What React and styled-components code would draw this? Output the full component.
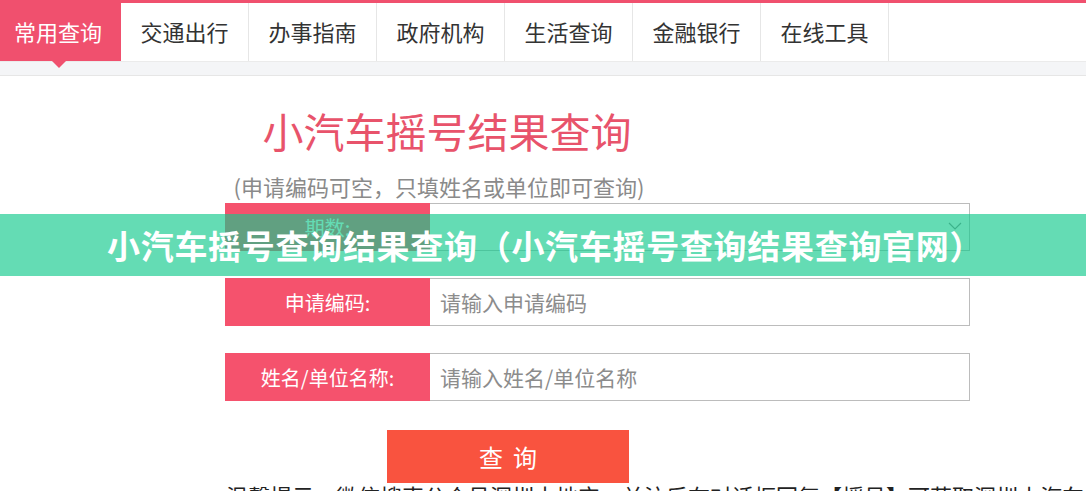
import React from "react";
import styled, { createGlobalStyle } from "styled-components";

const FONT = `"Noto Sans CJK SC", "Noto Sans", sans-serif`;

const Global = createGlobalStyle`
  html, body { margin: 0; padding: 0; background: #fff; overflow: hidden; }
  body { font-family: ${FONT}; }
  * { box-sizing: border-box; }
`;

const Page = styled.div`
  position: relative;
  width: 1086px;
  height: 491px;
  overflow: hidden;
  background: #fff;
`;

const TopLine = styled.div`
  height: 3px;
  background: #f0506e;
`;

const Nav = styled.nav`
  display: flex;
  height: 58px;
  background: #fff;
`;

const Tab = styled.div`
  position: relative;
  display: flex;
  align-items: center;
  justify-content: ${(p) => (p.$active ? "flex-start" : "center")};
  width: ${(p) => (p.$active ? 121 : 128)}px;
  padding-left: ${(p) => (p.$active ? 14 : 0)}px;
  padding-bottom: 2px;
  border-right: 1px solid ${(p) => (p.$active ? "#f0506e" : "#e6e6e6")};
  background: ${(p) => (p.$active ? "#f0506e" : "#fff")};
  color: ${(p) => (p.$active ? "#fff" : "#333")};
  font-size: 22px;
  line-height: 1;
  white-space: nowrap;
  ${(p) =>
    p.$active &&
    `&::after {
      content: "";
      position: absolute;
      left: 52px;
      bottom: -7px;
      border-left: 7px solid transparent;
      border-right: 7px solid transparent;
      border-top: 7px solid #f0506e;
    }`}
`;

const Strip = styled.div`
  height: 15px;
  background: #f4f5f7;
  border-top: 1px solid #ebebeb;
  border-bottom: 1px solid #e6e6e6;
`;

const Main = styled.main`
  padding-left: 225px;
`;

const Header = styled.div`
  width: 430px;
  text-align: center;
`;

const Title = styled.h1`
  margin: 29px 0 0 14px;
  font-size: 41px;
  line-height: 50px;
  font-weight: 400;
  color: #e8536b;
`;

const Subtitle = styled.p`
  margin: 16px 0 0 -2px;
  font-size: 22px;
  line-height: 30px;
  color: #8a8a8a;
  white-space: nowrap;
`;

const Form = styled.div`
  display: flex;
  flex-direction: column;
  gap: 27px;
  margin-top: 2px;
  width: 745px;
`;

const Row = styled.div`
  display: flex;
  height: 48px;
`;

const Label = styled.div`
  flex: 0 0 205px;
  display: flex;
  align-items: center;
  justify-content: center;
  background: #f5526d;
  color: #fff;
  font-size: 20px;
`;

const Field = styled.div`
  position: relative;
  flex: 1;
  display: flex;
  align-items: center;
  padding-left: 10px;
  border: 1px solid #bcbcbc;
  border-left: none;
  color: #8c8c8c;
  font-size: 21px;
  background: #fff;
`;

const Chevron = styled.svg`
  position: absolute;
  right: 7px;
  top: 50%;
  margin-top: -5px;
`;

const Button = styled.button`
  display: flex;
  align-items: center;
  justify-content: center;
  margin: 29px 0 0 162px;
  width: 242px;
  height: 53px;
  border: none;
  background: #f9533f;
  color: #fff;
  font-family: ${FONT};
  font-size: 24px;
  letter-spacing: 10px;
  padding: 0 0 0 10px;
`;

const Tip = styled.p`
  margin: 0 0 0 1px;
  font-size: 22px;
  line-height: 24px;
  color: #222;
  white-space: nowrap;
`;

const Banner = styled.div`
  position: absolute;
  left: 0;
  right: 0;
  top: 214px;
  height: 62px;
  display: flex;
  align-items: center;
  padding-left: 107px;
  background: rgba(18, 201, 140, 0.655);
  color: #fff;
  font-size: 33px;
  font-weight: 700;
  white-space: nowrap;
  letter-spacing: 0.7px;
`;

const tabs = ["常用查询", "交通出行", "办事指南", "政府机构", "生活查询", "金融银行", "在线工具"];

const rows = [
  { label: "期数:", value: "", select: true },
  { label: "申请编码:", value: "请输入申请编码" },
  { label: "姓名/单位名称:", value: "请输入姓名/单位名称" },
];

export default function App() {
  return (
    <Page>
      <Global />
      <TopLine />
      <Nav>
        {tabs.map((t, i) => (
          <Tab key={t} $active={i === 0}>
            {t}
          </Tab>
        ))}
      </Nav>
      <Strip />
      <Main>
        <Header>
          <Title>小汽车摇号结果查询</Title>
          <Subtitle>(申请编码可空，只填姓名或单位即可查询)</Subtitle>
        </Header>
        <Form>
          {rows.map((r) => (
            <Row key={r.label}>
              <Label>{r.label}</Label>
              <Field>
                {r.value}
                {r.select && (
                  <Chevron width="14" height="8" viewBox="0 0 14 8">
                    <path d="M1 1l6 6 6-6" fill="none" stroke="#888" strokeWidth="1.2" />
                  </Chevron>
                )}
              </Field>
            </Row>
          ))}
        </Form>
        <Button>查询</Button>
        <Tip>温馨提示：微信搜索公众号深圳本地宝，关注后在对话框回复【摇号】可获取深圳小汽车摇号指南</Tip>
      </Main>
      <Banner>小汽车摇号查询结果查询（小汽车摇号查询结果查询官网）</Banner>
    </Page>
  );
}
